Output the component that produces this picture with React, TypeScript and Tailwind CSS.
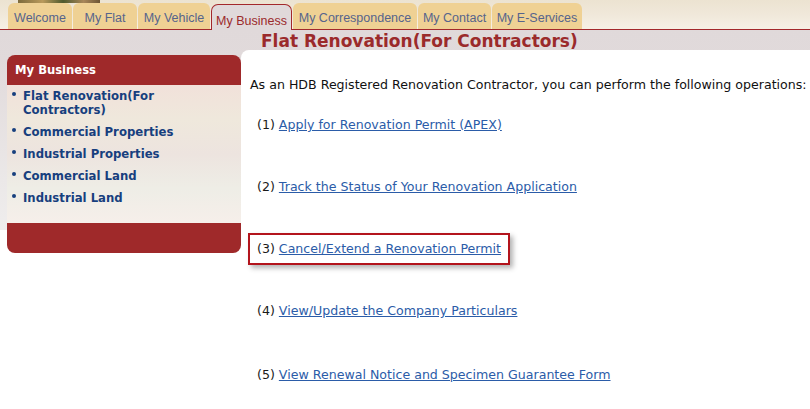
const tabs = [
  { label: 'Welcome', w: 'w-[64px]' },
  { label: 'My Flat', w: 'w-[64px]' },
  { label: 'My Vehicle', w: 'w-[72px]' },
  { label: 'My Business', w: 'w-[81px]', active: true },
  { label: 'My Correspondence', w: 'w-[124px]' },
  { label: 'My Contact', w: 'w-[73px]' },
  { label: 'My E-Services', w: 'w-[90px]' },
];

const sideLinks = [
  ['Flat Renovation(For', 'Contractors)'],
  ['Commercial Properties'],
  ['Industrial Properties'],
  ['Commercial Land'],
  ['Industrial Land'],
];

const operations = [
  'Apply for Renovation Permit (APEX)',
  'Track the Status of Your Renovation Application',
  'Cancel/Extend a Renovation Permit',
  'View/Update the Company Particulars',
  'View Renewal Notice and Specimen Guarantee Form',
];

export default function App() {
  return (
    <div className="w-[810px] h-[409px] overflow-hidden bg-white font-['DejaVu_Sans',Verdana,sans-serif]">
      {/* Tab bar */}
      <div className="h-[30px] border-b border-[#a3282b] bg-[linear-gradient(to_bottom,#ece3d1,#f0e8da_50%,#f6f0e5)]">
        <div className="h-[3px] ml-[18px] w-[82px] bg-[linear-gradient(90deg,#7d6b3c,#b99a5c_30%,#4f5a2e_55%,#a8875a_80%,#6d5535)]"></div>
        <div className="h-[26px] flex items-end gap-px pl-[8px] font-['Liberation_Sans',Arial,sans-serif] text-[12.5px] leading-[15px]">
          {tabs.map((t) =>
            t.active ? (
              <div
                key={t.label}
                className={`${t.w} h-[26px] -mb-px bg-[#e0d9da] border border-b-0 border-[#a3282b] rounded-t-[7px] pt-[9px] text-center text-[#9b2a2b] whitespace-nowrap`}
              >
                {t.label}
              </div>
            ) : (
              <div
                key={t.label}
                className={`${t.w} h-[26px] bg-[#efd194] rounded-t-[6px] pt-[8px] text-center text-[#56648c] whitespace-nowrap`}
              >
                {t.label}
              </div>
            )
          )}
        </div>
      </div>

      <div className="bg-[linear-gradient(to_bottom,#e0d9da_0px,#e1dadb_30px,#ebe8e8_150px,#efeded_200px,#ffffff_200px)]">
        {/* Title band */}
        <div className="h-[20px] pt-[2px] pl-[261px] text-[17px] leading-[18px] font-bold text-[#9b2a2b] whitespace-nowrap">
          Flat Renovation(For Contractors)
        </div>

        <div className="flex">
          {/* Sidebar */}
          <div className="w-[241px] shrink-0 pl-[7px] pt-[5px]">
            <div className="w-[234px] rounded-[8px] overflow-hidden">
              <div className="h-[30px] bg-[#9f292a] pl-[8px] text-white font-bold text-[11.6px] leading-[30px]">
                My Business
              </div>
              <div className="h-[138px] pt-[4px] bg-[linear-gradient(to_bottom,#f1e1da,#efe8dc_25%,#ede4df_50%,#eeede6_75%,#f6efea)] flex flex-col gap-[8px]">
                {sideLinks.map((lines) => (
                  <div key={lines[0]} className="flex text-[11.7px] leading-[14px] font-bold text-[#173f7e]">
                    <span className="w-[16px] shrink-0 pl-[5px] pt-[3px]">
                      <span className="block w-[4px] h-[4px] rounded-full bg-[#173f7e]"></span>
                    </span>
                    <span>
                      {lines.map((l, i) => (
                        <span key={i} className="block">{l}</span>
                      ))}
                    </span>
                  </div>
                ))}
              </div>
              <div className="h-[30px] bg-[#9f292a]"></div>
            </div>
          </div>

          {/* Content */}
          <div className="flex-1 h-[359px] bg-white rounded-tl-[8px] pl-[9px] pt-[28px] text-[12.6px] leading-[14px] text-[#111]">
            <p className="whitespace-nowrap">
              As an HDB Registered Renovation Contractor, you can perform the following operations:
            </p>
            <div className="mt-[26px] pl-[7px] flex flex-col gap-[48px]">
              {operations.map((op, i) => (
                <div key={op} className={i === 4 ? 'whitespace-nowrap pt-[2px]' : 'whitespace-nowrap'}>
                  <span className={i === 2 ? 'relative inline-block' : 'inline-block'}>
                    {i === 2 && (
                      <span className="absolute -inset-[9px] border-2 border-[#b3141c] shadow-[3px_3px_5px_rgba(0,0,0,0.3)]"></span>
                    )}
                    <span className="text-[#1a1a1a]">({i + 1}) </span>
                    <a href="#" className="underline text-[#2b5ca8]">
                      {op}
                    </a>
                  </span>
                </div>
              ))}
            </div>
          </div>
        </div>
      </div>
    </div>
  );
}
